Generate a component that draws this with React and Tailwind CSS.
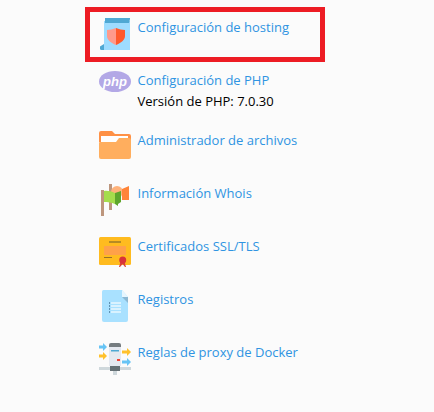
import React from "react";

const ScrollIcon = () => (
  <svg width="32" height="32" viewBox="0 0 32 32">
    <path d="M5 3h26v29H5z" fill="#9edcff" />
    <path d="M6 0h25v1l-1 4H6z" fill="#4fa8d3" />
    <path d="M1 28.500 5 26v6H2.500Q1 32 1 30.500z" fill="#4fa8d3" />
    <path d="M17 10c-3 1.300-6 2-9 2v6c0 4 4 7 9 9z" fill="#ff9a8b" />
    <path d="M17 10c3 1.300 6 2 9 2v6c0 4-4 7-9 9z" fill="#ff5a2c" />
  </svg>
);

const PhpIcon = () => (
  <svg width="32" height="32" viewBox="0 0 32 32">
    <ellipse cx="16" cy="10.500" rx="16" ry="10.500" fill="#b3a8e6" />
    <text x="16" y="14.500" textAnchor="middle" fill="#fff" fontFamily="'Liberation Sans', sans-serif" fontSize="13" fontWeight="700" fontStyle="italic">
      php
    </text>
  </svg>
);

const FolderIcon = () => (
  <svg width="32" height="32" viewBox="0 0 32 32">
    <path d="M0 2q0-2 2-2h11l3 3h14q2 0 2 2v6H0z" fill="#ff9146" />
    <path d="M2 5h27v6H2z" fill="#fff" />
    <path d="M0 12q0-1 1-1h16l3-4h10q2 0 2 2v17q0 2-2 2H2q-2 0-2-2z" fill="#ffae5e" />
  </svg>
);

const FlagIcon = () => (
  <svg width="32" height="33" viewBox="0 0 32 33">
    <path d="M10 0h3v26h-3z" fill="#bd967d" />
    <circle cx="18" cy="8" r="6" fill="#ffb27a" />
    <path d="M23 5l7-3v14h-5l-2 0z" fill="#ff8439" />
    <path d="M2 6h3v26H2z" fill="#bd967d" />
    <path d="M5 7c4-.5 7 .5 11 2v11c-4-1.500-7-2-11-2z" fill="#a5dd4c" />
    <path d="M16 9l6-2v11l-3 2v2l-3-2z" fill="#5ea62c" />
  </svg>
);

const CertIcon = () => (
  <svg width="32" height="32" viewBox="0 0 32 32">
    <rect width="32" height="28" rx="1.500" fill="#ffbb1f" />
    <path d="M10 4.500h12v1H10z" fill="#6b5a2b" />
    <path d="M5 9h22v9H5z" fill="#ffa149" />
    <path d="M5 20h8v1H5z" fill="#96702a" />
    <path d="M21.500 25l-1.500 5 1 0 2.700-3 2.300 3 1 0-1.500-5z" fill="#d8403a" />
    <circle cx="23.700" cy="23" r="3.500" fill="#d8323a" />
  </svg>
);

const DocIcon = () => (
  <svg width="32" height="32" viewBox="0 0 32 32">
    <path d="M3 1.500Q3 0 4.500 0H23l6 7v23q0 2-2 2H5q-2 0-2-2z" fill="#a9e1ff" />
    <path d="M23 0l6 7h-6z" fill="#e6f6ff" />
    <path d="M23 7h6v6z" fill="#8cb8d3" />
    <path d="M12 12h10v2H12zM12 15h10v2H12zM12 18h10v2H12zM12 21h10v2H12z" fill="#d9f2ff" />
    <path d="M10 12h1v2h-1zM10 15h1v2h-1zM10 18h1v2h-1zM10 21h1v2h-1z" fill="#5f93b3" />
  </svg>
);

const ProxyIcon = () => (
  <svg width="33" height="33" viewBox="0 0 33 33">
    <path d="M0 24h32v3H0z" fill="#cfd8dc" />
    <path d="M14 27h4v5h-4z" fill="#cfd8dc" />
    <path d="M10 2h12v21H10z" fill="#e5e9f0" />
    <path d="M10 2q0-2 2-2h8q2 0 2 2v2H10z" fill="#757c80" />
    <path d="M12 7h8v1.500h-8z" fill="#4fa8d3" />
    <path d="M18 16h3v2h-3z" fill="#f44336" />
    <path d="M11 23h10v5H11z" fill="#657075" />
    <path d="M0 2.500h4V0l4 4-4 4V5.500H0z" fill="#66c4f5" />
    <path d="M0 11.500h4V9l4 4-4 4v-2.500H0z" fill="#ffc12b" />
    <path d="M23 7.500h5V5l4 4-4 4v-2.500h-5z" fill="#ffc12b" />
    <path d="M23 17.500h5V15l4 4-4 4v-2.500h-5z" fill="#66c4f5" />
  </svg>
);

const Row = ({ icon, title, note }) => (
  <div className="flex gap-[5.5px] h-[53px]">
    <div className="w-[33px] shrink-0">{icon}</div>
    <div className="-mt-px">
      <a className="block text-[#2f94e2]">{title}</a>
      {note && <p className="text-black">{note}</p>}
    </div>
  </div>
);

const App = () => {
  return (
    <div className="w-[434px] h-[412px] overflow-hidden bg-[#fbfbfb] pt-[7px] pl-[85px] text-[13px] leading-[21px] font-['Open_Sans',sans-serif]">
      <div className="w-[240px] h-[55px] border-[5px] border-[#ed1c24] pl-[9px] pt-[6px] mb-[9px]">
        <Row icon={<ScrollIcon />} title="Configuración de hosting" />
      </div>
      <div className="pl-[14px]">
        <div className="h-[60px]">
          <Row icon={<PhpIcon />} title="Configuración de PHP" note="Versión de PHP: 7.0.30" />
        </div>
        <Row icon={<FolderIcon />} title="Administrador de archivos" />
        <Row icon={<FlagIcon />} title="Información Whois" />
        <Row icon={<CertIcon />} title="Certificados SSL/TLS" />
        <Row icon={<DocIcon />} title="Registros" />
        <Row icon={<ProxyIcon />} title="Reglas de proxy de Docker" />
      </div>
    </div>
  );
};

export default App;
